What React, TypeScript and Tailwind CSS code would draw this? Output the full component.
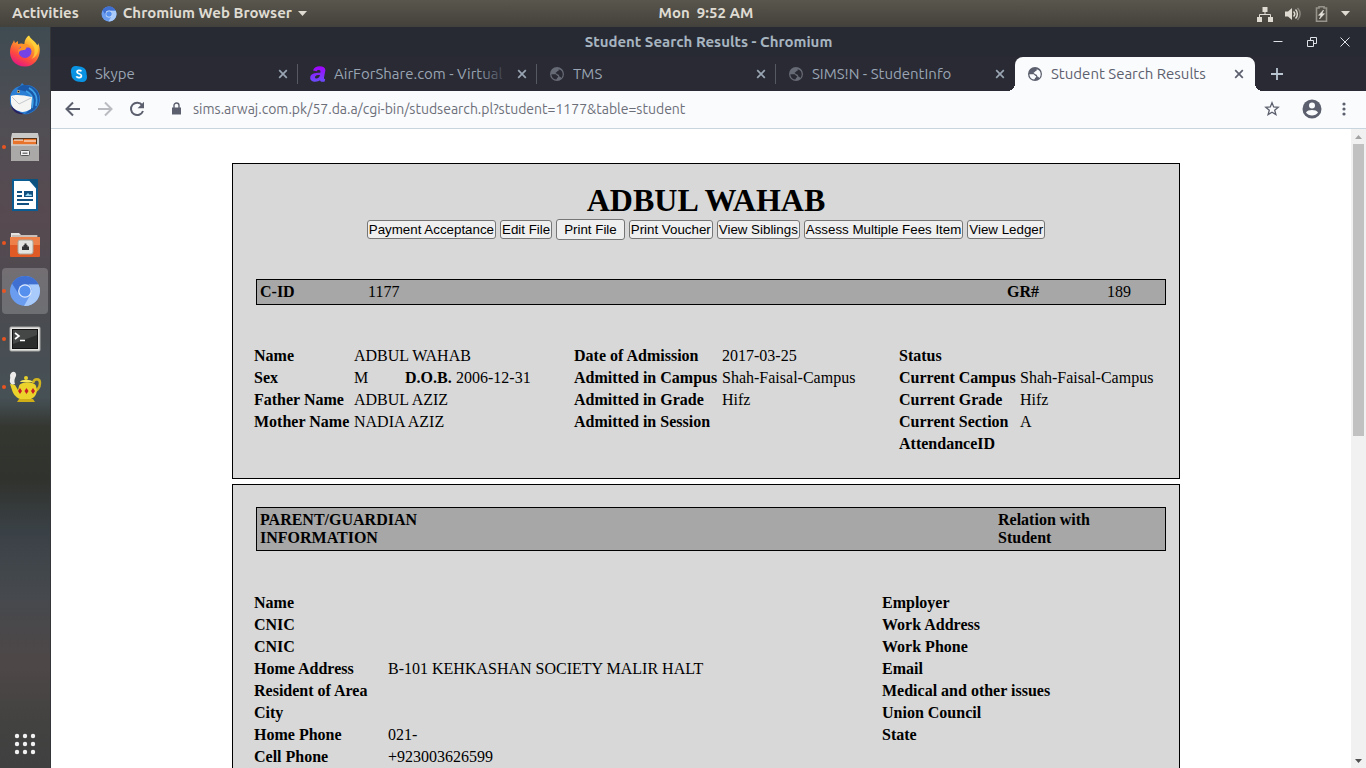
import type { ReactNode } from "react";

function ChromiumIcon({ size }: { size: number }) {
  return (
    <svg width={size} height={size} viewBox="0 0 32 32" aria-hidden="true">
      <circle cx="16" cy="16" r="15" fill="#6a9df0" />
      <path d="M3 8.5A15 15 0 0 1 29.5 9.5H16a7 7 0 0 0-6.300 9.500z" fill="#3f6fd0" />
      <path d="M29.500 9.500A15 15 0 0 1 15 31l6.500-11.500A7 7 0 0 0 19.500 9.500z" fill="#a9cbfb" />
      <circle cx="16" cy="16" r="6.800" fill="#dfeafd" />
      <circle cx="16" cy="16" r="5.600" fill="#5590ee" />
    </svg>
  );
}

function FirefoxIcon() {
  return (
    <svg width="32" height="32" viewBox="0 0 32 32" aria-hidden="true">
      <defs>
        <linearGradient id="fox" x1="0.8" y1="0" x2="0.3" y2="1">
          <stop offset="0" stopColor="#fff44f" />
          <stop offset="0.35" stopColor="#ffa02a" />
          <stop offset="0.7" stopColor="#ff4b3e" />
          <stop offset="1" stopColor="#e31587" />
        </linearGradient>
      </defs>
      <path d="M20 .5c1 3.500 6 5.500 8 10 .8-.5 1-1.500 1-2.500 5 9-1 23.500-13 23.500C6 31.500 1 24 1 17c0-4 1.200-7 3.200-10l.8-2 1 3 3-2v3c3-1 5-.5 6.500.5C15 5.500 17.500 2 20 .5z" fill="url(#fox)" />
      <circle cx="16" cy="16.500" r="6.500" fill="#7542e5" />
      <path d="M12 10c4-2 9-1 10.500 4-2-2-4-1.500-5-1.500-1 3-3 2.500-5.500 3-2 .5-2 2-2.500 3-1-3 0-4.500 2.500-6z" fill="#ff9329" />
      <path d="M20 .5c-1 6 6 8.500 5.500 15.500 0 3-1 6-3 8 5-2 8-7 6-13.500-2-4.500-7-6-8.500-10z" fill="#ffd43a" opacity=".75" />
    </svg>
  );
}

function ThunderbirdIcon() {
  return (
    <svg width="32" height="32" viewBox="0 0 32 32" aria-hidden="true">
      <path d="M13 0l2 2c9-1 16 5 16 14 0 7-5 13-12 15-7 1-14-2-17-8-3-9 0-18 9-20z" fill="#2b7fd4" />
      <path d="M15 2c10 0 17 7 15 17-2 7-7 11-14 12 7-6 10-14 4-20-4-4-8-3-12-5 2-2 4-4 7-4z" fill="#1c58a8" />
      <path d="M20 5c7 4 9 10 7 18M17 8c7 4 8 8 6 17" stroke="#3fa2e8" strokeWidth="1.500" fill="none" />
      <path d="M2 13c5-2 12-1 21 1l-1 12c-5 3-9 4-12 2-5-1-8-5-8-9z" fill="#f5f6f4" />
      <path d="M3 14l7 7 12-6" stroke="#c4c8cc" fill="none" />
      <path d="M2 22c3 5 8 7 13 9-7 1-12-3-13-9z" fill="#29205f" />
      <circle cx="9.500" cy="8.500" r="1.500" fill="#e5b567" />
      <circle cx="9.500" cy="8.500" r=".8" fill="#111" />
    </svg>
  );
}

function FilesIcon() {
  return (
    <svg width="30" height="32" viewBox="0 0 30 32" aria-hidden="true">
      <path d="M2 2h26l1 5v23H1V7z" fill="#c9c9c7" />
      <path d="M3 7h24v7H3z" fill="#5a3418" />
      <path d="M3 9h10l1-1h12v6H3z" fill="#e8732a" />
      <path d="M4 9h9M14 10h12" stroke="#fff" />
      <path d="M1 13.500h28V29a1 1 0 0 1-1 1H2a1 1 0 0 1-1-1z" fill="#aaa9a7" />
      <path d="M1 14h28" stroke="#e6e6e4" />
      <rect x="10.500" y="19.500" width="9" height="5" rx="1" fill="#f3f3f3" stroke="#555" />
      <path d="M12.500 21.500h5v1.500h-5z" fill="#777" />
    </svg>
  );
}

function WriterIcon() {
  return (
    <svg width="26" height="32" viewBox="0 0 26 32" aria-hidden="true">
      <path d="M1 1h17l7 8v22H1z" fill="#fff" stroke="#0b5c92" strokeWidth="2" />
      <path d="M16 0h10v10z" fill="#0d527f" />
      <path d="M5 13h5M5 17h5M5 21h16M5 25h12" stroke="#12517f" strokeWidth="2" />
      <rect x="12" y="12" width="9" height="6" fill="#12517f" />
      <path d="M13 17l3-3 2 2 1-1 1 2z" fill="#9fdcf5" />
    </svg>
  );
}

function NetworkFolderIcon() {
  return (
    <svg width="32" height="32" viewBox="0 -4 32 32" aria-hidden="true">
      <path d="M2 2h8l2 2h16v6H2z" fill="#e5e2df" />
      <path d="M3 5h26" stroke="#ad9d94" />
      <path d="M1 6h30v19a1 1 0 0 1-1 1H2a1 1 0 0 1-1-1z" fill="#e05a25" />
      <path d="M1 6h30v8H1z" fill="#ee8049" />
      <rect x="9" y="9" width="15" height="14" rx="2" fill="#e3e4df" stroke="#aaa69a" />
      <path d="M13 19v-3.500h1.500V14h1v-1.500h2V14h1v1.500H20V19z" fill="#333" />
    </svg>
  );
}

function TerminalIcon() {
  return (
    <svg width="32" height="26" viewBox="0 0 32 26" aria-hidden="true">
      <rect x="1" y="1" width="30" height="24" rx="1" fill="#e4e4e2" stroke="#a7a7a5" />
      <rect x="3.500" y="3.500" width="25" height="19" fill="#2b2d2d" stroke="#111" />
      <path d="M4 4h24v5L4 18z" fill="#454747" />
      <path d="M6 7l4 3-4 3M11 14.500h5" stroke="#fff" strokeWidth="1.600" fill="none" />
    </svg>
  );
}

function TeapotIcon() {
  return (
    <svg width="34" height="32" viewBox="0 0 34 32" aria-hidden="true">
      <path d="M4 14C0 10 3 8 2 5c0-4 5-6 6-2 1 3-3 4-1 10z" fill="#ecebea" />
      <path d="M25 12c1-5 7-5 7 0 0 5-3 8-8 10" stroke="#d0b321" strokeWidth="2.500" fill="none" />
      <path d="M2 13l5 1 3 5 1-4c2-5 15-5 17 0 2 6 0 11-5 13H12c-5-2-7-6-8-9z" fill="#ecd32b" />
      <path d="M12 11c1-3 11-3 13 0z" fill="#f4e55b" />
      <circle cx="18" cy="7" r="2" fill="#e7cf2b" />
      <path d="M11 28h14l2 3H9z" fill="#cfae17" />
      <path d="M12 17l2 3-2 3-2-3zM18.500 17l2 3-2 3-2-3zM25 17l2 3-2 3-2-3z" fill="#c81d25" />
    </svg>
  );
}

function SkypeIcon() {
  return (
    <svg width="16" height="16" viewBox="0 0 16 16" aria-hidden="true">
      <path d="M4.500 0C7 0 7 .4 8.500.4 13 .4 16 4 15.600 8.500c.4 1 .4 1.500.4 3A4.500 4.500 0 0 1 11.500 16c-1.500 0-2-.3-3.500-.3C3.500 15.700.2 12 .4 8 0 7 0 6 0 4.500A4.500 4.500 0 0 1 4.500 0z" fill="#0a93e2" />
      <path d="M10.400 5.300C9.700 4 6 3.700 6 5.900c0 2.300 4.400 1.400 4.400 3.800 0 2.500-4.300 2.400-5 .6" stroke="#fff" strokeWidth="1.700" fill="none" />
    </svg>
  );
}

function AirForShareIcon() {
  return (
    <svg width="16" height="16" viewBox="0 0 16 16" aria-hidden="true">
      <defs>
        <linearGradient id="air" x1="0" y1="0" x2="0" y2="1">
          <stop offset="0" stopColor="#a400ff" />
          <stop offset="1" stopColor="#6a4dfa" />
        </linearGradient>
      </defs>
      <path d="M3 4.500C4 1.500 6.500.2 9.500.2c4 0 6.300 1.600 5.800 4.600L14 11.500c-.1 1 .1 1.500 1.200 1.500l-.5 2.500c-2.500.6-4.200.2-4.700-1.300C8.500 15.800.2 17.300.2 11.700c0-4 4.300-5 10.100-5 .5-1.800 0-2.700-1.700-2.700-1 0-1.600.3-2 1.200zM10 9c-3.300 0-5 .5-5 2.200 0 2.500 4.400 1.500 5-2.200z" fill="url(#air)" />
    </svg>
  );
}

function GlobeIcon() {
  return (
    <svg width="16" height="16" viewBox="0 0 24 24" fill="currentColor" aria-hidden="true">
      <path d="M12 1.500a10.500 10.500 0 1 0 0 21 10.500 10.500 0 0 0 0-21zm-1.500 18.800C6 19.600 3.600 16 3.600 12.200l6.400.3c1.700.5 1.300 2.500 3.500 2.500.8 1.500-.5 2.500-1.500 3 0 1.300-.5 2-1.500 2.300zm7.500-2c0-2-1-2.300-2.500-2.500 0-2-1-3-3-3.500-1-1-2.500-.5-2.500-2 0-1.300 2-1 2.500-2.500 1.500 0 2.500-1 2-3 4 1 6 4 6 7.500 0 2.500-1 4.500-2.500 6z" />
    </svg>
  );
}

function Cross() {
  return (
    <svg width="16" height="16" viewBox="0 0 16 16" stroke="currentColor" strokeWidth="1.700" aria-hidden="true">
      <path d="M4.200 4.200l7.600 7.600M11.800 4.200l-7.600 7.600" />
    </svg>
  );
}

const tabs: { title: string; icon: ReactNode; active?: boolean; divider?: boolean }[] = [
  { title: "Skype", icon: <SkypeIcon />, divider: true },
  { title: "AirForShare.com - Virtual", icon: <AirForShareIcon />, divider: true },
  { title: "TMS", icon: <span className="flex text-[#666a75]"><GlobeIcon /></span>, divider: true },
  { title: "SIMS!N - StudentInfo", icon: <span className="flex text-[#666a75]"><GlobeIcon /></span> },
  { title: "Student Search Results", icon: <GlobeIcon />, active: true },
];

function TopBar() {
  return (
    <header className="flex h-[27px] shrink-0 items-center bg-linear-to-b from-[#59564d] to-[#43413b] px-3 text-[15px] font-bold text-[#dfdbd2]">
      <div className="flex flex-1 items-center gap-[22px]">
        <button type="button">Activities</button>
        <button type="button" className="flex items-center gap-1.5">
          <ChromiumIcon size={16} />
          Chromium Web Browser
          <svg width="9" height="5" viewBox="0 0 9 5" fill="currentColor" aria-hidden="true"><path d="M0 0h9L4.500 5z" /></svg>
        </button>
      </div>
      <time className="pl-[50px] whitespace-pre">Mon  9:52 AM</time>
      <div className="flex flex-1 items-center justify-end gap-3 pr-1">
        <svg width="16" height="16" viewBox="0 0 16 16" fill="currentColor" aria-hidden="true">
          <path d="M5.500 1h5v5h-5zM0 11h5v5H0zM11 11h5v5h-5z" />
          <path d="M8 6v2.500M2.500 11V8.500h11V11" fill="none" stroke="currentColor" />
        </svg>
        <svg width="16" height="16" viewBox="0 0 16 16" fill="none" stroke="currentColor" strokeWidth="1.500" aria-hidden="true">
          <path d="M0 5.500h3L7 2v12l-4-3.500H0z" fill="currentColor" stroke="none" />
          <path d="M8.500 5.500c1.500 1.500 1.500 3.500 0 5M10.500 3.500c2.500 2.500 2.500 6.500 0 9" />
          <path d="M12.500 2c3.500 3.500 3.500 8.500 0 12" opacity=".4" />
        </svg>
        <svg width="16" height="16" viewBox="0 0 16 16" aria-hidden="true">
          <path d="M6 2V.8h5V2h2.500v13.200h-10V2z" fill="none" stroke="#96938b" strokeWidth="1.600" />
          <path d="M10.500 4L5.500 9.300H8L6.500 13l5-5.300H9z" fill="#e6e3dc" stroke="#e6e3dc" strokeWidth=".6" />
        </svg>
        <svg width="9" height="5" viewBox="0 0 9 5" fill="currentColor" aria-hidden="true"><path d="M0 0h9L4.500 5z" /></svg>
      </div>
    </header>
  );
}

const dock: { name: string; icon: ReactNode; running?: boolean; active?: boolean }[] = [
  { name: "Firefox", icon: <FirefoxIcon /> },
  { name: "Thunderbird", icon: <ThunderbirdIcon /> },
  { name: "Files", icon: <FilesIcon />, running: true },
  { name: "Writer", icon: <WriterIcon /> },
  { name: "Network folder", icon: <NetworkFolderIcon />, running: true },
  { name: "Chromium", icon: <ChromiumIcon size={32} />, running: true, active: true },
  { name: "Terminal", icon: <TerminalIcon />, running: true },
  { name: "Teapot", icon: <TeapotIcon />, running: true },
];

function Dock() {
  return (
    <nav className="flex w-[51px] shrink-0 flex-col items-center border-r border-[#35363a] bg-[linear-gradient(to_bottom,#3f4b52_0%,#504e54_13%,#574a50_26%,#4a4b50_38%,#465156_50%,#343630_54%,#30322d_61%,#3a4146_68%,#45494e_76%,#4e4747_86%,#424241_94%,#404040_100%)] pb-1">
      {dock.map((item) => (
        <button
          key={item.name}
          type="button"
          aria-label={item.name}
          className="relative flex h-12 w-full items-center justify-center"
        >
          <span className={item.active ? "flex h-[46px] w-[46px] items-center justify-center rounded bg-white/20" : "flex"}>
            {item.icon}
          </span>
          {item.running && <span className="absolute top-[22px] left-0.5 h-1 w-1 rounded-full bg-[#e95420]" />}
        </button>
      ))}
      <button type="button" aria-label="Show applications" className="mt-auto flex h-10 w-full items-center justify-center">
        <svg width="22" height="22" viewBox="0 0 22 22" fill="#f2f2f2" aria-hidden="true">
          {[3, 11, 19].map((y) => [3, 11, 19].map((x) => <circle key={`${x}-${y}`} cx={x} cy={y} r="2.200" />))}
        </svg>
      </button>
    </nav>
  );
}

function TabStrip() {
  return (
    <div className="bg-[#292a33]">
      <div className="flex h-[30px] items-center bg-[#272a33] pr-[15px]">
        <span className="w-[94px]" />
        <h1 className="flex-1 text-center text-[15px] font-bold text-[#a7b5c0]">Student Search Results - Chromium</h1>
        <div className="flex w-[79px] items-center justify-between text-[#dfe3e8]">
          <button type="button" aria-label="Minimise">
            <svg width="12" height="12" viewBox="0 0 12 12" stroke="currentColor" aria-hidden="true"><path d="M1.500 5.500h9" /></svg>
          </button>
          <button type="button" aria-label="Restore">
            <svg width="12" height="12" viewBox="0 0 12 12" stroke="currentColor" fill="none" aria-hidden="true">
              <path d="M1.500 4.500h6v6h-6zM4.500 4V1.500h6v6H8" />
            </svg>
          </button>
          <button type="button" aria-label="Close">
            <svg width="12" height="12" viewBox="0 0 12 12" stroke="currentColor" aria-hidden="true"><path d="M1.500 1.500l9 9M10.500 1.500l-9 9" /></svg>
          </button>
        </div>
      </div>
      <div className="flex h-[34px] pl-2">
        {tabs.map((tab) => (
          <div
            key={tab.title}
            className={
              tab.active
                ? "relative flex max-w-[240px] flex-1 items-center gap-2 rounded-t-lg bg-[#fafbfd] pr-2 pl-3 text-[#5c606e]"
                : "relative flex max-w-[239px] flex-1 items-center gap-2 pr-[7px] pl-3 text-[#9aa5b3]"
            }
          >
            {tab.icon}
            <span className="flex-1 overflow-hidden text-[15px] whitespace-nowrap">{tab.title}</span>
            <button type="button" aria-label={`Close ${tab.title}`}>
              <Cross />
            </button>
            {tab.divider && <span className="absolute right-0 h-5 w-px bg-[#565862]" />}
            {tab.title.startsWith("AirForShare") && (
              <span className="absolute right-7 h-5 w-8 bg-linear-to-r from-transparent to-[#292a33]" />
            )}
            {tab.active && (
              <>
                <span className="absolute bottom-0 -left-2 h-2 w-2 bg-[radial-gradient(circle_at_0_0,#292a33_8px,#fafbfd_8px)]" />
                <span className="absolute -right-2 bottom-0 h-2 w-2 bg-[radial-gradient(circle_at_100%_0,#292a33_8px,#fafbfd_8px)]" />
              </>
            )}
          </div>
        ))}
        <button type="button" aria-label="New tab" className="ml-3.5 self-center text-[#b9c6d2]">
          <svg width="16" height="16" viewBox="0 0 16 16" stroke="currentColor" strokeWidth="1.800" aria-hidden="true"><path d="M8 2v12M2 8h12" /></svg>
        </button>
      </div>
    </div>
  );
}

function Toolbar() {
  return (
    <div className="flex h-[38px] items-center border-b border-[#c8d5df] bg-[#fafbfd] px-3.5 pb-px text-[#5c606e]">
      <div className="flex items-center gap-4">
        <button type="button" aria-label="Back">
          <svg width="16" height="16" viewBox="0 0 16 16" fill="none" stroke="currentColor" strokeWidth="2" aria-hidden="true"><path d="M15 8H2M8 1.500L1.500 8 8 14.500" /></svg>
        </button>
        <button type="button" aria-label="Forward" className="text-[#b9bbc1]">
          <svg width="16" height="16" viewBox="0 0 16 16" fill="none" stroke="currentColor" strokeWidth="2" aria-hidden="true"><path d="M1 8h13M8 1.500L14.500 8 8 14.500" /></svg>
        </button>
        <button type="button" aria-label="Reload">
          <svg width="16" height="16" viewBox="0 0 16 16" fill="none" stroke="currentColor" strokeWidth="2" aria-hidden="true">
            <path d="M13.200 4.200A6.200 6.200 0 1 0 14 10" />
            <path d="M15 .8v6.400H8.600z" fill="currentColor" stroke="none" />
          </svg>
        </button>
      </div>
      <svg className="ml-6" width="14" height="14" viewBox="0 0 14 14" aria-hidden="true">
        <path d="M3 5.500h9v7H3z" fill="currentColor" />
        <path d="M5 6V3.500a2.500 2.500 0 0 1 5 0V6" fill="none" stroke="currentColor" strokeWidth="1.400" />
      </svg>
      <input
        type="text"
        aria-label="Address"
        defaultValue="sims.arwaj.com.pk/57.da.a/cgi-bin/studsearch.pl?student=1177&table=student"
        className="ml-2.5 min-w-0 flex-1 bg-transparent text-sm text-[#6c6f79] outline-none"
      />
      <div className="flex items-center gap-3.5">
        <button type="button" aria-label="Bookmark">
          <svg width="16" height="16" viewBox="0 0 16 16" fill="none" stroke="currentColor" strokeWidth="1.300" aria-hidden="true">
            <path d="M8 1.800l1.700 4.200 4.500.3-3.500 2.900 1.200 4.400L8 11.200l-3.900 2.400 1.200-4.400L1.800 6.300l4.500-.3z" />
          </svg>
        </button>
        <button type="button" aria-label="Profile" className="ml-2">
          <svg width="20" height="20" viewBox="0 0 20 20" aria-hidden="true">
            <circle cx="10" cy="10" r="9.500" fill="currentColor" />
            <circle cx="10" cy="6.500" r="3" fill="#fafbfd" />
            <path d="M4 13.500c1.500-3.300 10.500-3.300 12 0-2.500 4-9.500 4-12 0z" fill="#fafbfd" />
          </svg>
        </button>
        <button type="button" aria-label="Menu" className="flex w-4 justify-center">
          <svg width="4" height="16" viewBox="0 0 4 16" fill="currentColor" aria-hidden="true">
            <circle cx="2" cy="3" r="1.600" /><circle cx="2" cy="8" r="1.600" /><circle cx="2" cy="13" r="1.600" />
          </svg>
        </button>
      </div>
    </div>
  );
}

const actions = [
  "Payment Acceptance",
  "Edit File",
  "Print File",
  "Print Voucher",
  "View Siblings",
  "Assess Multiple Fees Item",
  "View Ledger",
];

const guardianRows = [
  ["Name", "", "Employer"],
  ["CNIC", "", "Work Address"],
  ["CNIC", "", "Work Phone"],
  ["Home Address", "B-101 KEHKASHAN SOCIETY MALIR HALT", "Email"],
  ["Resident of Area", "", "Medical and other issues"],
  ["City", "", "Union Council"],
  ["Home Phone", "021-", "State"],
  ["Cell Phone", "+923003626599", ""],
];

function StudentCard() {
  return (
    <section className="border border-black bg-[#d8d8d8] pt-[18px] pb-[23px]">
      <h2 className="text-center text-[32px] leading-[37px] font-bold">ADBUL WAHAB</h2>
      <div className="flex h-[21px] items-center justify-center gap-1 font-['Liberation_Sans',Arial,sans-serif] text-[10pt] leading-[15px]">
        {actions.map((label) => (
          <button
            key={label}
            type="button"
            className={
              label === "Print File"
                ? "rounded-[3px] border border-[#767676] bg-[#efefef] px-[7px] py-0.5"
                : "rounded-[3px] border border-[#767676] bg-[#efefef] px-px py-px"
            }
          >
            {label}
          </button>
        ))}
      </div>
      <div className="pr-[13px] pl-[21px]">
        <dl className="mt-[39px] ml-0.5 flex h-[26px] items-center border border-black bg-[#a7a7a7] pl-[3px]">
          <dt className="w-[108px] font-bold">C-ID</dt>
          <dd className="flex-1">1177</dd>
          <dt className="w-[100px] font-bold">GR#</dt>
          <dd className="w-[58px]">189</dd>
        </dl>
        <table className="mt-10 w-full table-fixed text-left leading-[22px] whitespace-nowrap [&_td]:p-0 [&_th]:p-0">
          <colgroup>
            <col className="w-[100px]" />
            <col className="w-[51px]" />
            <col className="w-[51px]" />
            <col className="w-[118px]" />
            <col className="w-[148px]" />
            <col className="w-[177px]" />
            <col className="w-[121px]" />
            <col />
          </colgroup>
          <tbody>
            <tr>
              <th>Name</th><td colSpan={3}>ADBUL WAHAB</td>
              <th>Date of Admission</th><td>2017-03-25</td>
              <th>Status</th><td />
            </tr>
            <tr>
              <th>Sex</th><td>M</td><th>D.O.B.</th><td>2006-12-31</td>
              <th>Admitted in Campus</th><td>Shah-Faisal-Campus</td>
              <th>Current Campus</th><td>Shah-Faisal-Campus</td>
            </tr>
            <tr>
              <th>Father Name</th><td colSpan={3}>ADBUL AZIZ</td>
              <th>Admitted in Grade</th><td>Hifz</td>
              <th>Current Grade</th><td>Hifz</td>
            </tr>
            <tr>
              <th>Mother Name</th><td colSpan={3}>NADIA AZIZ</td>
              <th>Admitted in Session</th><td />
              <th>Current Section</th><td>A</td>
            </tr>
            <tr>
              <td colSpan={6} />
              <th>AttendanceID</th><td />
            </tr>
          </tbody>
        </table>
      </div>
    </section>
  );
}

function GuardianCard() {
  return (
    <section className="mt-[5px] border border-black bg-[#d8d8d8] pt-[22px] pr-[13px] pb-[23px] pl-[21px]">
      <div className="ml-0.5 flex h-11 items-center justify-between border border-black bg-[#a7a7a7] pl-[3px] leading-[18px] font-bold">
        <h3 className="w-[170px]">PARENT/GUARDIAN INFORMATION</h3>
        <p className="w-[167px] pr-16">Relation with Student</p>
      </div>
      <table className="mt-[41px] w-full table-fixed text-left leading-[22px] whitespace-nowrap [&_td]:p-0 [&_th]:p-0">
        <colgroup>
          <col className="w-[134px]" />
          <col className="w-[494px]" />
          <col />
        </colgroup>
        <tbody>
          {guardianRows.map(([label, value, right], i) => (
            <tr key={i}>
              <th>{label}</th>
              <td>{value}</td>
              <th>{right}</th>
            </tr>
          ))}
        </tbody>
      </table>
    </section>
  );
}

function Scrollbar() {
  return (
    <div className="flex w-[15px] shrink-0 flex-col items-center bg-[#f1f1f1]" aria-hidden="true">
      <div className="flex h-[15px] items-center">
        <svg width="7" height="4" viewBox="0 0 7 4" fill="#a3a3a3"><path d="M0 4h7L3.500 0z" /></svg>
      </div>
      <div className="flex w-full flex-1 flex-col px-0.5">
        <div className="h-[48%] bg-[#c1c1c1]" />
      </div>
      <div className="flex h-[15px] items-center">
        <svg width="7" height="4" viewBox="0 0 7 4" fill="#505050"><path d="M0 0h7L3.500 4z" /></svg>
      </div>
    </div>
  );
}

export default function App() {
  return (
    <div className="flex h-screen flex-col overflow-hidden font-['Ubuntu','Noto_Sans',sans-serif]">
      <TopBar />
      <div className="flex min-h-0 flex-1">
        <Dock />
        <div className="flex min-w-0 flex-1 flex-col">
          <TabStrip />
          <Toolbar />
          <div className="flex min-h-0 flex-1">
            <main className="min-w-0 flex-1 overflow-hidden bg-white pt-[34px] pl-2.5 font-['Liberation_Serif','Times_New_Roman',serif] text-base text-black">
              <div className="mx-auto max-w-[948px]">
                <StudentCard />
                <GuardianCard />
              </div>
            </main>
            <Scrollbar />
          </div>
        </div>
      </div>
    </div>
  );
}
